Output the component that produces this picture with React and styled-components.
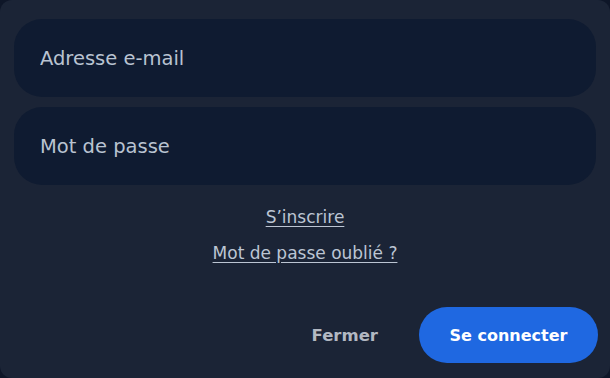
import styled, { createGlobalStyle } from 'styled-components';

const GlobalStyle = createGlobalStyle`
  html, body {
    margin: 0;
    padding: 0;
    background: #0e1628;
  }
  body {
    font-family: "DejaVu Sans", "Noto Sans", sans-serif;
  }
`

const Panel = styled.div`
  width: 610px;
  height: 378px;
  box-sizing: border-box;
  background: #1b2436;
  border-radius: 12px;
  padding: 19px 14px 15px 14px;
  display: flex;
  flex-direction: column;
`

const Field = styled.input`
  height: 78px;
  box-sizing: border-box;
  width: 100%;
  border: none;
  outline: none;
  border-radius: 28px;
  background: #0f1b31;
  padding: 0 26px;
  font-family: inherit;
  font-size: 19.5px;
  color: #c7d0dd;
  margin-bottom: ${props => props.$gap || 0}px;

  &::placeholder {
    color: #b9c3d1;
  }
`

const Links = styled.div`
  display: flex;
  flex-direction: column;
  align-items: center;
  gap: 16px;
  margin-top: 22px;
`

const LinkText = styled.a`
  font-size: 17px;
  color: #bcc5d3;
  text-decoration: underline;
  text-underline-offset: 3px;
  cursor: pointer;
`

const Actions = styled.div`
  margin-top: auto;
  margin-right: -2px;
  display: flex;
  justify-content: flex-end;
  align-items: center;
  gap: 41px;
`

const CloseBtn = styled.button`
  border: none;
  background: none;
  font-family: inherit;
  font-weight: 700;
  font-size: 16.5px;
  color: #b2b8c2;
  cursor: pointer;
  padding: 0;
`

const SubmitBtn = styled.button`
  width: 179px;
  height: 56px;
  border: none;
  border-radius: 28px;
  background: #1f68e1;
  color: #ffffff;
  font-family: inherit;
  font-weight: 700;
  font-size: 16px;
  cursor: pointer;
`

const App = () => {
  return (
    <>
      <GlobalStyle />
      <Panel>
        <Field type="email" placeholder="Adresse e-mail" $gap={10} />
        <Field type="password" placeholder="Mot de passe" />
        <Links>
          <LinkText>S’inscrire</LinkText>
          <LinkText>Mot de passe oublié ?</LinkText>
        </Links>
        <Actions>
          <CloseBtn>Fermer</CloseBtn>
          <SubmitBtn>Se connecter</SubmitBtn>
        </Actions>
      </Panel>
    </>
  )
}

export default App;
